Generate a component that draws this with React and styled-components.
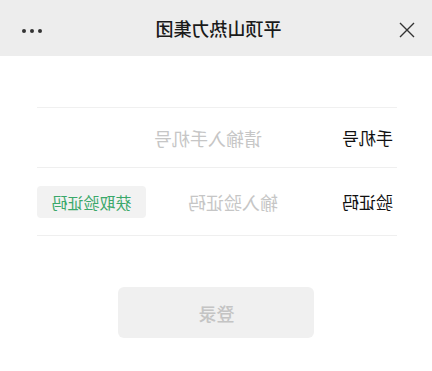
import React from 'react';
import styled, { createGlobalStyle } from 'styled-components';

const GlobalStyle = createGlobalStyle`
    html, body {
        margin: 0;
        padding: 0;
        background: #ffffff;
    }
    body {
        font-family: "Noto Sans CJK SC", "Noto Sans", sans-serif;
    }
`;

// the screenshot is a mirrored capture, so the whole page is flipped
const Page = styled.div`
    width: 432px;
    height: 371px;
    overflow: hidden;
    background: #ffffff;
    transform: scaleX(-1);
`;

const Header = styled.header`
    height: 56px;
    background-color: #ededed;
    display: flex;
    align-items: center;
    justify-content: space-between;
    padding: 0 22px 0 17px;
    box-sizing: border-box;
`;

const CloseButton = styled.button`
    width: 16px;
    height: 16px;
    padding: 0;
    border: none;
    background: none;
    display: flex;
    margin-top: 4px;
`;

const Title = styled.h1`
    margin: 0 0 0 4px;
    font-size: 18px;
    font-weight: 500;
    color: #1a1a1a;
`;

const MoreButton = styled.div`
    display: flex;
    gap: 4px;
    margin-top: 6px;

    span {
        width: 4px;
        height: 4px;
        border-radius: 50%;
        background: #333;
    }
`;

const Form = styled.form`
    margin: 51px 37px 0 35px;
    border-top: 1px solid #f0f0f0;
`;

const Row = styled.div`
    display: flex;
    align-items: center;
    min-height: ${(p) => p.$height}px;
    border-bottom: 1px solid #efefef;
    box-sizing: border-box;
    padding-left: 4px;
`;

const Label = styled.label`
    width: 51px;
    flex-shrink: 0;
    font-size: 17px;
    color: #111;
`;

const Input = styled.input`
    flex: 1;
    min-width: 0;
    margin-left: ${(p) => p.$indent}px;
    border: none;
    outline: none;
    background: transparent;
    font-family: inherit;
    font-size: 18px;
    color: #333;
    padding: 0;

    &::placeholder {
        color: #c6c6c6;
    }
`;

const CodeButton = styled.button`
    width: 109px;
    height: 32px;
    flex-shrink: 0;
    border: none;
    border-radius: 4px;
    background: #f2f2f2;
    color: #3aa86a;
    font-family: inherit;
    font-size: 16px;
    padding: 0;
`;

const Actions = styled.div`
    display: flex;
    justify-content: center;
    margin-top: 51px;
    padding-left: 1px;
`;

const LoginButton = styled.button`
    width: 196px;
    height: 51px;
    border: none;
    border-radius: 6px;
    background: #f0f0f0;
    color: #c4c4c4;
    font-family: inherit;
    font-size: 18px;
    font-weight: 500;
`;

const App = () => {
    return (
        <Page>
            <GlobalStyle />
            <Header>
                <CloseButton aria-label="关闭">
                    <svg width="16" height="16" viewBox="0 0 16 16">
                        <path d="M1 1 L15 15 M15 1 L1 15" stroke="#333" strokeWidth="1.4" fill="none" />
                    </svg>
                </CloseButton>
                <Title>平顶山热力集团</Title>
                <MoreButton>
                    <span />
                    <span />
                    <span />
                </MoreButton>
            </Header>

            <Form onSubmit={(e) => e.preventDefault()}>
                <Row $height={60}>
                    <Label>手机号</Label>
                    <Input $indent={80} type="tel" placeholder="请输入手机号" />
                </Row>
                <Row $height={68}>
                    <Label>验证码</Label>
                    <Input $indent={64} type="text" placeholder="输入验证码" />
                    <CodeButton type="button">获取验证码</CodeButton>
                </Row>
                <Actions>
                    <LoginButton type="submit">登录</LoginButton>
                </Actions>
            </Form>
        </Page>
    );
};

export default App;
